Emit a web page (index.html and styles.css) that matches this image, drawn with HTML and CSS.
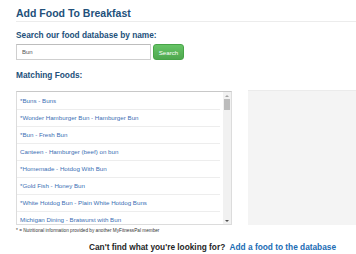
FILE: index.html
```html
<!DOCTYPE html>
<html lang="en">
<head>
    <meta charset="UTF-8">
    <title>Add Food To Breakfast</title>
    <link rel="stylesheet" href="styles.css">
</head>
<body>
    <div class="page">
        <h1 class="page-title">Add Food To Breakfast</h1>

        <form class="search-form">
            <label class="section-label" for="search">Search our food database by name:</label>
            <div class="search-row">
                <input class="search-input" id="search" type="text" value="Bun">
                <button class="search-button" type="button">Search</button>
            </div>
        </form>

        <h2 class="section-label matching">Matching Foods:</h2>

        <div class="results">
            <div class="results-column">
                <div class="food-list">
                    <ul class="food-items">
                        <li><a href="#">*Buns - Buns</a></li>
                        <li><a href="#">*Wonder Hamburger Bun - Hamburger Bun</a></li>
                        <li><a href="#">*Bun - Fresh Bun</a></li>
                        <li><a href="#">Canteen - Hamburger (beef) on bun</a></li>
                        <li><a href="#">*Homemade - Hotdog With Bun</a></li>
                        <li><a href="#">*Gold Fish - Honey Bun</a></li>
                        <li><a href="#">*White Hotdog Bun - Plain White Hotdog Buns</a></li>
                        <li><a href="#">Michigan Dining - Bratwurst with Bun</a></li>
                    </ul>
                    <!-- fake scrollbar -->
                    <div class="scrollbar">
                        <span class="arrow up"></span>
                        <span class="thumb"></span>
                        <span class="arrow down"></span>
                    </div>
                </div>
                <p class="footnote">* = Nutritional information provided by another MyFitnessPal member</p>
            </div>
            <div class="nutrition-panel"></div>
        </div>

        <p class="add-food">
            Can't find what you're looking for?
            <a href="#">Add a food to the database</a>
        </p>
    </div>
</body>
</html>
```

FILE: styles.css
```css
* {
    margin: 0;
    padding: 0;
    box-sizing: border-box;
}

body {
    background-color: #ffffff;
    color: #222222;
    font-family: "Liberation Sans", Arial, sans-serif;
    overflow: hidden;
}

.page {
    padding-left: 16px;
}

/* Heading */
.page-title {
    margin-top: 7px;
    font-size: 10.5px;
    line-height: 13px;
    font-weight: bold;
    color: #22507a;
    padding-bottom: 1px;
    border-bottom: 1px solid #ececec;
}

.section-label {
    display: block;
    font-size: 8.3px;
    line-height: 10px;
    font-weight: bold;
    color: #22507a;
}

/* Search */
.search-form {
    margin-top: 8px;
}

.search-row {
    display: flex;
    gap: 2px;
    margin-top: 4px;
}

.search-input {
    width: 135px;
    height: 16px;
    border: 1px solid #cfcfcf;
    border-top-color: #bdbdbd;
    padding: 0 5px;
    font-family: inherit;
    font-size: 6px;
    color: #555555;
    outline: none;
}

.search-button {
    width: 31px;
    height: 16px;
    border: 1px solid #47a447;
    border-radius: 3px;
    background: linear-gradient(#66c466, #4fa84f);
    color: #ffffff;
    font-family: inherit;
    font-size: 6.2px;
}

.matching {
    margin-top: 10px;
}

/* Results */
.results {
    display: flex;
    gap: 16px;
    margin-top: 11px;
}

.results-column {
    width: 216px;
}

.food-list {
    display: flex;
    height: 134px;
    border: 1px solid #dcdcdc;
    border-top-color: #c8c8c8;
    overflow: hidden;
}

.food-items {
    flex: 1;
    list-style: none;
    padding-top: 1px;
    margin-right: 3px;
    overflow: hidden;
}

.food-items li {
    height: 17px;
    line-height: 16px;
    padding-left: 3px;
    border-bottom: 1px solid #ededed;
    font-size: 6.2px;
    white-space: nowrap;
}

.food-items a {
    color: #3c6fb4;
    text-decoration: none;
}

.scrollbar {
    width: 8px;
    display: flex;
    flex-direction: column;
    align-items: center;
    background-color: #f1f1f1;
    padding: 3px 0 2px;
}

.scrollbar .thumb {
    width: 6px;
    height: 11px;
    margin-top: 2px;
    background-color: #bcbcbc;
}

.scrollbar .arrow {
    width: 0;
    height: 0;
    border-left: 2px solid transparent;
    border-right: 2px solid transparent;
}

.scrollbar .arrow.up {
    border-bottom: 2px solid #a3a3a3;
}

.scrollbar .arrow.down {
    margin-top: auto;
    border-top: 2px solid #505050;
}

.footnote {
    margin-top: 3px;
    font-size: 4.7px;
    line-height: 6px;
    color: #333333;
}

.nutrition-panel {
    flex: 1;
    height: 135px;
    margin-top: -1px;
    background-color: #f4f4f4;
    border-top: 1px solid #ebebeb;
}

/* Footer prompt */
.add-food {
    margin-top: 8px;
    padding-left: 73px;
    font-size: 8.3px;
    line-height: 10px;
    font-weight: bold;
    color: #1f1f1f;
}

.add-food a {
    margin-left: 2px;
    color: #206cb4;
    text-decoration: none;
}
```
